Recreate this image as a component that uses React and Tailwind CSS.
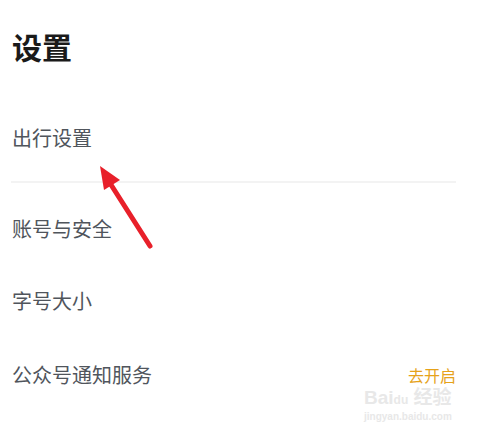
export default function App() {
  const rows = [
    { label: "账号与安全", h: "h-[72px]" },
    { label: "字号大小", h: "h-[72px]" },
  ];

  return (
    <div
      className="relative w-[479px] h-[426px] bg-white overflow-hidden"
      style={{ fontFamily: '"Noto Sans CJK SC", "Noto Sans", sans-serif' }}
    >
      {/* Title */}
      <div className="pl-[12px] pt-[28px] text-[30px] leading-[36px] font-bold text-[#1a1a1a]">
        设置
      </div>

      {/* 出行设置 */}
      <div className="pl-[12px] pr-[23px] pt-[60px] pb-[29px]">
        <div className="text-[20px] leading-[28px] text-[#50555c]">出行设置</div>
      </div>
      <div className="ml-[11px] mr-[23px] h-[2px] bg-[#f3f3f3]" />

      <div className="mt-[10px]">
        {rows.map((r) => (
          <div key={r.label} className={`flex items-center pl-[12px] pr-[23px] ${r.h}`}>
            <span className="text-[20px] leading-[28px] text-[#50555c]">{r.label}</span>
          </div>
        ))}
        <div className="flex items-center justify-between pl-[12px] pr-[23px] h-[76px]">
          <span className="text-[20px] leading-[28px] text-[#50555c]">公众号通知服务</span>
          <span className="text-[16px] leading-[20px] text-[#e6a21a]">去开启</span>
        </div>
      </div>

      {/* Red arrow annotation */}
      <svg className="absolute left-0 top-0" width="479" height="426" viewBox="0 0 479 426">
        <line x1="108" y1="180" x2="150" y2="246" stroke="#e8202a" strokeWidth="5" strokeLinecap="round" />
        <polygon points="100,166 104,190 120,180" fill="#e8202a" />
      </svg>

      {/* Watermark */}
      <div className="absolute left-[364px] top-[388px] flex flex-col items-start text-[#e8e8e8] select-none">
        <span className="text-[19px] leading-[19px] font-bold" style={{ fontFamily: '"Liberation Sans", "Noto Sans CJK SC", sans-serif' }}>
          Bai<span className="text-[12px]">du</span> 经验
        </span>
        <span className="text-[10px] leading-[13px] font-bold" style={{ fontFamily: '"Liberation Sans", sans-serif' }}>
          jingyan.baidu.com
        </span>
      </div>
    </div>
  );
}
